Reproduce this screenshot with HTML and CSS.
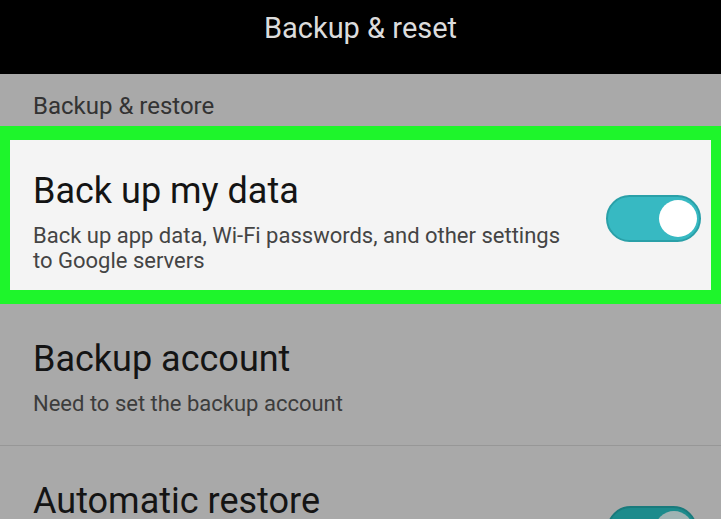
FILE: index.html
```html
<!DOCTYPE html>
<html>
<head>
<meta charset="utf-8">
<link rel="stylesheet" href="styles.css">
</head>
<body>
<div class="screen">
  <header class="topbar"><span class="title">Backup &amp; reset</span></header>
  <div class="section-label">Backup &amp; restore</div>
  <div class="highlight">
    <div class="row row-white">
      <div class="texts">
        <div class="row-title">Back up my data</div>
        <div class="row-sub">Back up app data, Wi-Fi passwords, and other settings<br>to Google servers</div>
      </div>
      <div class="toggle on"><span class="knob"></span></div>
    </div>
  </div>
  <div class="row row-account">
    <div class="texts">
      <div class="row-title">Backup account</div>
      <div class="row-sub">Need to set the backup account</div>
    </div>
  </div>
  <div class="row row-restore">
    <div class="texts">
      <div class="row-title">Automatic restore</div>
    </div>
    <div class="toggle dim"><span class="knob"></span></div>
  </div>
</div>
</body>
</html>
```
FILE: styles.css
```css
* { box-sizing: border-box; }
html, body { margin: 0; padding: 0; }
body {
  width: 721px;
  height: 519px;
  overflow: hidden;
  background: #a9a9a9;
  font-family: Roboto, "Noto Sans", sans-serif;
}
.screen {
  display: flex;
  flex-direction: column;
  height: 519px;
  overflow: hidden;
}
.topbar {
  flex: none;
  height: 74px;
  background: #000;
  display: flex;
  justify-content: center;
  padding-top: 11px;
}
.title {
  color: #dcdcdc;
  font-size: 29px;
  line-height: 34px;
}
.section-label {
  flex: none;
  height: 52px;
  padding: 18px 0 0 33px;
  color: #333;
  font-size: 24px;
  line-height: 28px;
}
.highlight {
  flex: none;
  border: 14px solid #1ef52b;
  border-left-width: 10px;
  border-right-width: 10px;
  background: #f4f4f4;
  height: 178px;
}
.row {
  display: flex;
  align-items: flex-start;
  justify-content: space-between;
  flex: none;
}
.row-white {
  height: 150px;
  padding: 30px 10px 0 23px;
}
.texts { display: flex; flex-direction: column; }
.row-title {
  color: #141414;
  font-size: 36px;
  line-height: 42px;
}
.row-sub {
  color: #444;
  font-size: 22px;
  line-height: 25px;
  margin-top: 11px;
}
.row-account {
  height: 142px;
  padding: 34px 0 0 33px;
  border-bottom: 1px solid #979797;
}
.row-account .row-sub { color: #3c3c3c; }
.row-restore {
  padding: 34px 24px 0 33px;
}
.toggle {
  width: 95px;
  height: 47px;
  border-radius: 24px;
  background: #37b9c2;
  border: 2px solid #2aa0a8;
  position: relative;
  margin-top: 25px;
}
.toggle .knob {
  position: absolute;
  right: 2px;
  top: 3px;
  width: 38px;
  height: 37px;
  border-radius: 50%;
  background: #fff;
}
.toggle.dim {
  width: 90px;
  background: #1c8b8c;
  border-color: #197a7c;
  margin-top: 26px;
}
.toggle.dim .knob { background: #9fb3b3; }
```
